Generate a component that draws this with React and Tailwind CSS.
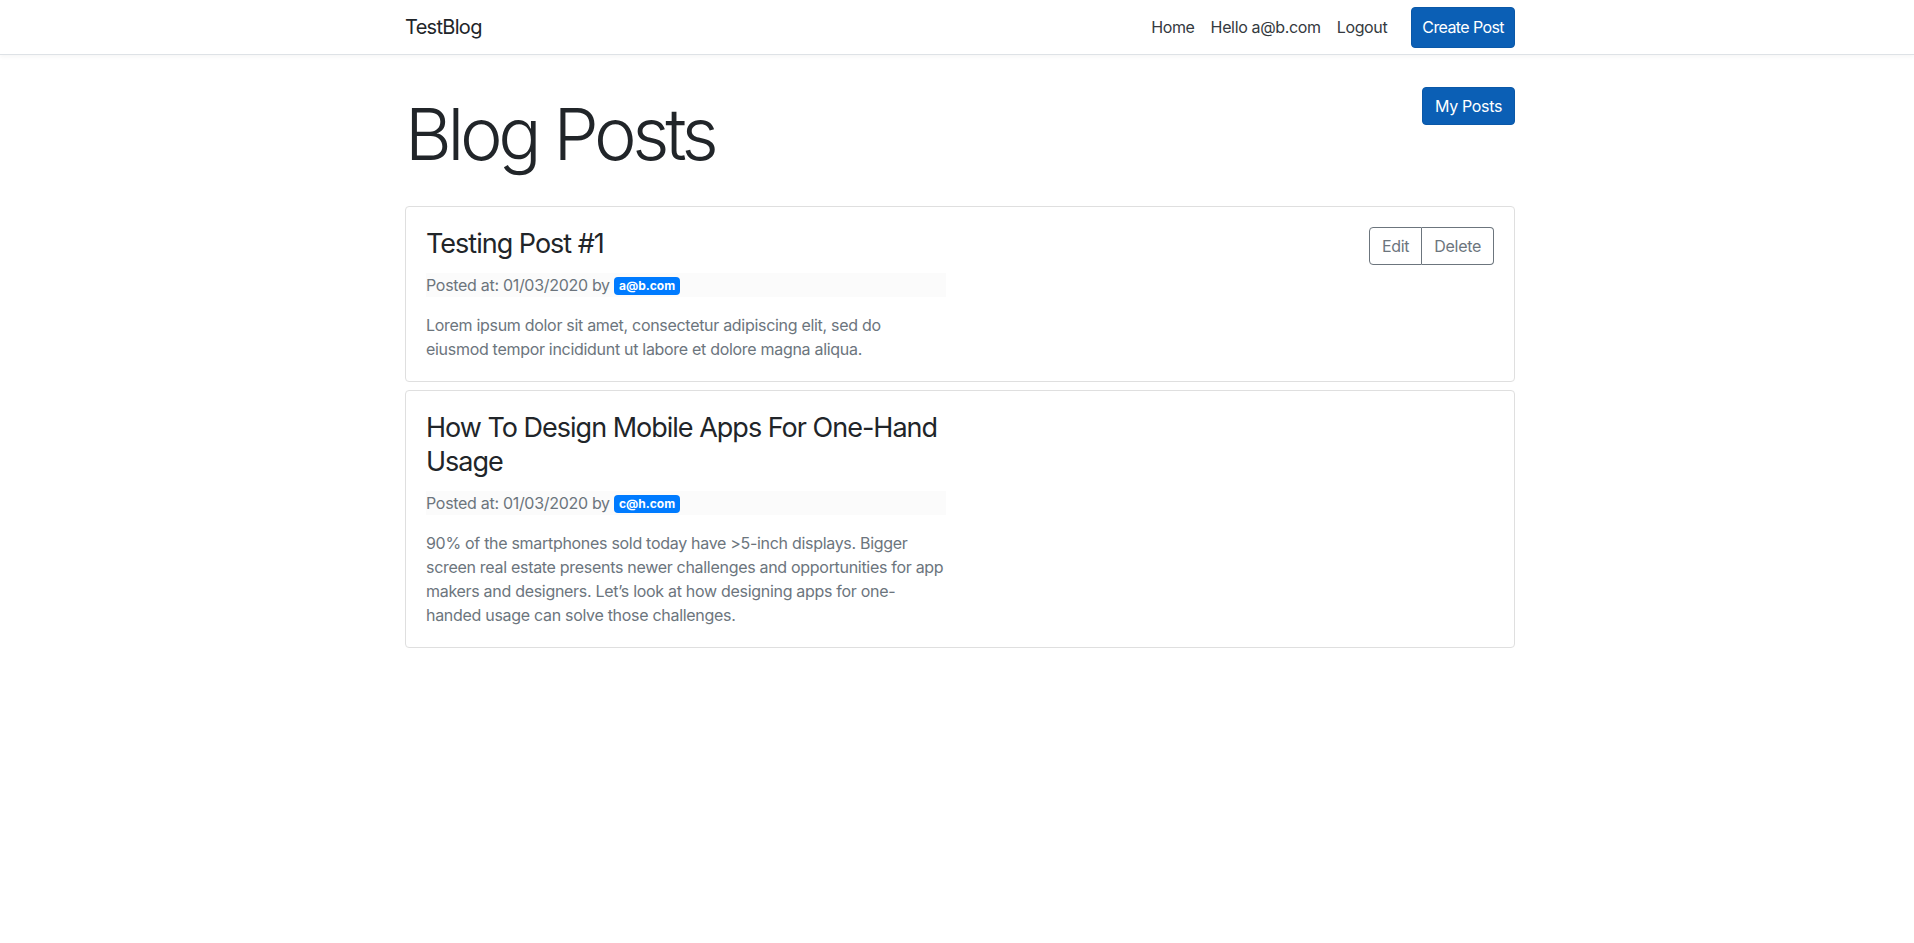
import React from 'react';

const posts = [
  {
    id: 1,
    title: 'Testing Post #1',
    date: '01/03/2020',
    author: 'a@b.com',
    body: 'Lorem ipsum dolor sit amet, consectetur adipiscing elit, sed do eiusmod tempor incididunt ut labore et dolore magna aliqua.',
    mine: true,
  },
  {
    id: 2,
    title: 'How To Design Mobile Apps For One-Hand Usage',
    date: '01/03/2020',
    author: 'c@h.com',
    body: '90% of the smartphones sold today have >5-inch displays. Bigger screen real estate presents newer challenges and opportunities for app makers and designers. Let\u2019s look at how designing apps for one-handed usage can solve those challenges.',
    mine: false,
  },
];

const Navbar = () => (
  <nav className="bg-white border-b border-[#dee2e6] shadow-[0_2px_4px_rgba(0,0,0,0.04)] pl-[6px]">
    <div className="w-[1110px] mx-auto flex items-center justify-between h-[54px]">
      <a href="#" className="text-[20px] leading-[30px] tracking-[-0.7px] text-[#212529]">TestBlog</a>
      <div className="flex items-center text-[16px] tracking-[-0.35px]">
        <a href="#" className="px-2 text-[#343a40]">Home</a>
        <a href="#" className="px-2 text-[#343a40]">Hello a@b.com</a>
        <a href="#" className="px-2 text-[#343a40]">Logout</a>
        <button className="ml-4 h-[41px] px-[10px] rounded-[4px] bg-[#0b5fb5] border border-[#0a58a8] text-white tracking-[-0.6px]">
          Create Post
        </button>
      </div>
    </div>
  </nav>
);

const PostCard = ({ post }) => (
  <div className="border border-[#dfdfdf] rounded-[4px] bg-white p-5 flex justify-between">
    <div className="w-[520px]">
      <h3 className="text-[27px] leading-[34px] font-normal tracking-[-1px] text-[#212529] mb-3">{post.title}</h3>
      <p className="text-[16px] leading-6 tracking-[-0.3px] text-[#6c757d] bg-[#fbfbfb] mb-4">
        Posted at: {post.date} by{' '}
        <span className="inline-block align-[1px] px-[5px] py-[3px] rounded-[4px] bg-[#007bff] text-white text-[12px] leading-none font-bold tracking-normal">
          {post.author}
        </span>
      </p>
      <p className="text-[16px] leading-6 tracking-[-0.3px] text-[#6c757d]">{post.body}</p>
    </div>
    {post.mine && (
      <div className="flex self-start text-[16px] tracking-[-0.3px] text-[#6c757d]">
        <button className="h-[38px] px-3 border border-[#6c757d] rounded-l-[4px]">Edit</button>
        <button className="h-[38px] px-3 border border-l-0 border-[#6c757d] rounded-r-[4px]">Delete</button>
      </div>
    )}
  </div>
);

export default function App() {
  return (
    <div className="min-h-screen bg-white font-['Inter','Liberation_Sans',sans-serif] text-[#212529]">
      <Navbar />
      <div className="pl-[6px]">
        <div className="w-[1110px] mx-auto pt-8">
          <div className="flex justify-between items-start">
            <h1 className="text-[72px] leading-[1.2] font-light tracking-[-4.3px] mt-1 mb-[29px]">Blog Posts</h1>
            <button className="h-[38px] px-3 rounded-[4px] bg-[#0b5fb5] border border-[#0a58a8] text-white text-[16px] tracking-[-0.35px]">
              My Posts
            </button>
          </div>
          <div className="flex flex-col gap-2">
            {posts.map((p) => (
              <PostCard key={p.id} post={p} />
            ))}
          </div>
        </div>
      </div>
    </div>
  );
}
